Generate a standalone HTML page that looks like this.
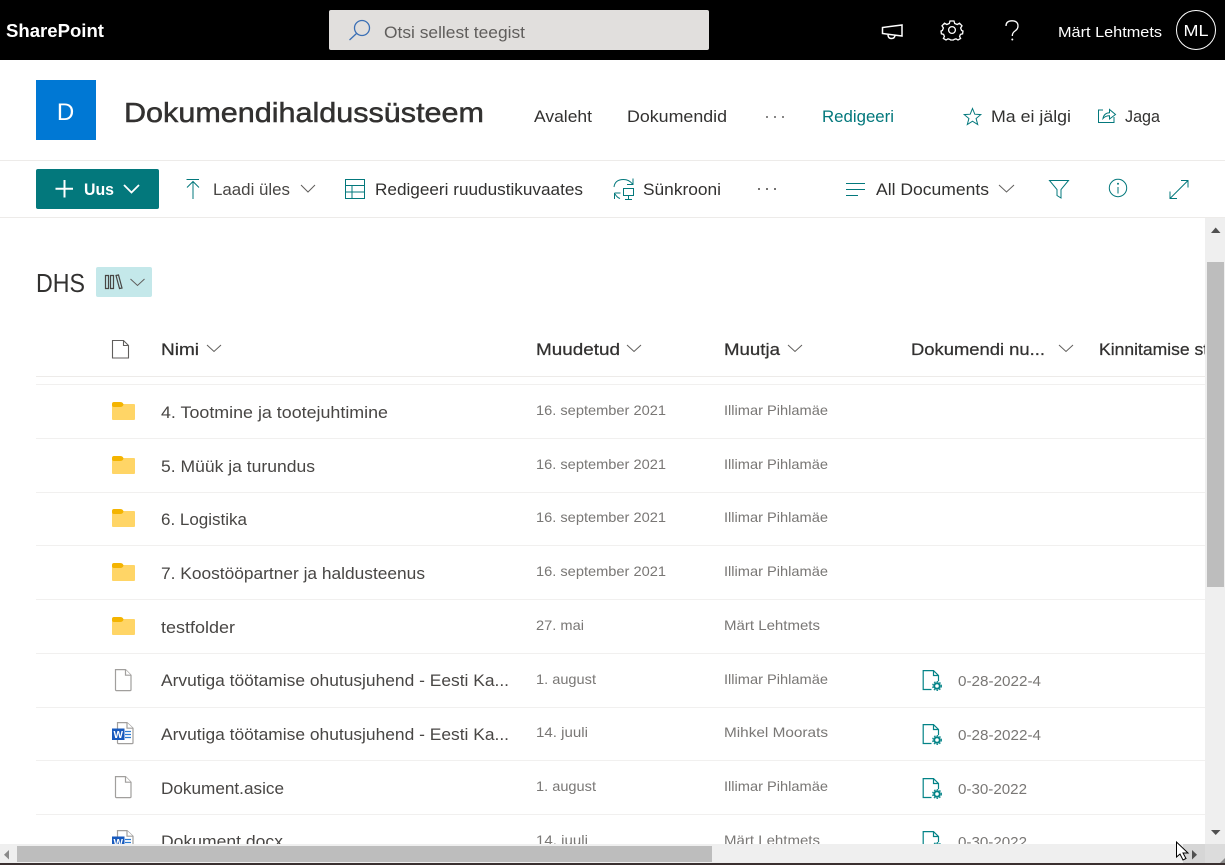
<!DOCTYPE html>
<html lang="et"><head><meta charset="utf-8"><title>DHS</title>
<style>
html,body{margin:0;padding:0;background:#fff;width:1225px;height:865px;overflow:hidden}
svg{display:block}
text{font-family:"Liberation Sans",sans-serif}
.n{font-size:17px;fill:#484644}
.d{font-size:14px;fill:#797775}
.a{font-size:14px;fill:#797775}
.h{font-size:17px;fill:#323130;stroke:#323130;stroke-width:.25}
.nav{font-size:17px;fill:#323130}
.num{font-size:14.5px;fill:#797775}
.ln{stroke:#f1f0ef;stroke-width:1;fill:none}
.ic{fill:none;stroke:#03787c;stroke-width:1}
.ch{fill:none;stroke:#605e5c;stroke-width:1}
.pg{fill:#fff;stroke:#a19f9d;stroke-width:1.2}
</style></head><body>
<svg xmlns="http://www.w3.org/2000/svg" width="1225" height="865" viewBox="0 0 1225 865">
<defs>
<clipPath id="list"><rect x="0" y="218" width="1205" height="626"/></clipPath>
<symbol id="folder" overflow="visible"><path fill="#ffd566" d="M0 3Q0 2 1 2H22Q23 2 23 3V17Q23 18 22 18H1Q0 18 0 17Z"/><path fill="#f4b400" d="M0 2Q0 0 2 0H8Q11 0 11.5 2.5Q11 5 8 5H2Q0 5 0 3Z"/></symbol>
<symbol id="file" overflow="visible"><path class="pg" d="M1.5 0.6H11.5L17 6.2V20.6Q17 21.6 16 21.6H2.5Q1.5 21.6 1.5 20.6Z"/><path class="pg" d="M11.5 0.6V6.2H17" fill="none"/></symbol>
<symbol id="word" overflow="visible"><path class="pg" d="M5.5 0.6H15L21 6.2V20.6Q21 21.6 20 21.6H6.5Q5.5 21.6 5.5 20.6Z"/><path class="pg" d="M15 0.6V6.2H21" fill="none"/><path d="M13 9.5H19M13 12.5H19M13 15.5H19" stroke="#2b7cd3" stroke-width="1.2"/><rect x="0" y="6.5" width="12.5" height="11.5" fill="#185abd"/><text x="6.2" y="16" font-size="10" font-weight="bold" fill="#fff" text-anchor="middle">W</text></symbol>
<symbol id="doc" overflow="visible"><path d="M9.5 19.5H1.2V0.6H11.5L16.5 5.5V11M11.5 0.6V5.5H16.5" fill="none" stroke="#038387" stroke-width="1.2"/><circle cx="15" cy="16" r="2.8" fill="none" stroke="#038387" stroke-width="2"/><circle cx="15" cy="16" r="4.4" fill="none" stroke="#038387" stroke-width="1.1" stroke-dasharray="1.6 1.3"/></symbol>
</defs>

<rect width="1225" height="865" fill="#fff"/>
<!-- suite bar -->
<rect width="1225" height="60" fill="#000"/>
<text x="6" y="37" font-size="18" font-weight="bold" fill="#fff" textLength="98" lengthAdjust="spacingAndGlyphs">SharePoint</text>
<rect x="329" y="10" width="380" height="40" rx="2" fill="#e1dfdd"/>
<circle cx="362" cy="28" r="7.5" fill="none" stroke="#3a6fb5" stroke-width="1.3"/><path d="M356.5 33.5L349.5 40" stroke="#3a6fb5" stroke-width="1.3"/>
<text x="384" y="38" font-size="17" fill="#605e5c" textLength="141" lengthAdjust="spacingAndGlyphs">Otsi sellest teegist</text>
<path d="M882.5 27.5V33.5L902 36V25ZM888 34.5Q888 38.5 891.5 38.5Q894.5 38.5 895 35.5" fill="none" stroke="#fff" stroke-width="1.5"/>
<circle cx="952" cy="30" r="3.4" fill="none" stroke="#fff" stroke-width="1.3"/>
<path d="M950 21H954L954.7 23.5L957.2 24.5L959.5 23.2L962 25.8L960.6 28L961.6 30.5L963 31L962.6 33.8L960.4 34.4L959.6 36.5L960.6 38.5L958 40L956 38.8L954 39.5L953.4 40H950.6L950 39.5L948 38.8L946 40L943.4 38.5L944.4 36.5L943.6 34.4L941.4 33.8L941 31L942.4 30.5L943.4 28L942 25.8L944.5 23.2L946.8 24.5L949.3 23.5Z" fill="none" stroke="#fff" stroke-width="1.3"/>
<path d="M1006 26Q1006 20.8 1012 20.8Q1018 20.8 1018 26Q1018 29 1015 31Q1012.3 32.8 1012.3 36" fill="none" stroke="#fff" stroke-width="1.3"/><circle cx="1012.3" cy="39.5" r="1" fill="#fff"/>
<text x="1058" y="37" font-size="15" fill="#fff" textLength="104" lengthAdjust="spacingAndGlyphs">Märt Lehtmets</text>
<circle cx="1196" cy="30" r="19.5" fill="#000" stroke="#fff" stroke-width="1"/>
<text x="1196" y="36" font-size="16" fill="#fff" text-anchor="middle" textLength="25" lengthAdjust="spacingAndGlyphs">ML</text>

<!-- site header -->
<rect x="36" y="80" width="60" height="60" fill="#0078d4"/>
<text x="65.5" y="120" font-size="24" fill="#fff" text-anchor="middle">D</text>
<text x="124" y="122" font-size="28" fill="#323130" textLength="360" lengthAdjust="spacingAndGlyphs" style="stroke:#323130;stroke-width:.5">Dokumendihaldussüsteem</text>
<text class="nav" x="534" y="122" textLength="58" lengthAdjust="spacingAndGlyphs">Avaleht</text>
<text class="nav" x="627" y="122" textLength="100" lengthAdjust="spacingAndGlyphs">Dokumendid</text>
<g fill="#323130"><circle cx="767" cy="117" r=".9"/><circle cx="775" cy="117" r=".9"/><circle cx="783" cy="117" r=".9"/></g>
<text x="822" y="122" font-size="17" fill="#03787c" textLength="72" lengthAdjust="spacingAndGlyphs">Redigeeri</text>
<path d="M972.5 108.5L974.8 114.2L980.8 114.6L976.1 118.5L977.7 124.5L972.5 121.2L967.3 124.5L968.9 118.5L964.2 114.6L970.2 114.2Z" class="ic"/>
<text class="nav" x="991" y="122" textLength="80" lengthAdjust="spacingAndGlyphs">Ma ei jälgi</text>
<path d="M1103 110H1098.5V122.5H1114V117M1103 118.5Q1104 113 1109.5 112.8V109.5L1115.5 114.5L1109.5 119V115.8Q1105.5 115.8 1103 118.5Z" class="ic"/>
<text class="nav" x="1125" y="122" textLength="35" lengthAdjust="spacingAndGlyphs">Jaga</text>
<line x1="0" y1="160.5" x2="1225" y2="160.5" stroke="#edebe9"/>

<!-- command bar -->
<rect x="36" y="169" width="123" height="40" rx="2" fill="#03787c"/>
<path d="M64.5 180V197.5M55.5 188.7H73" stroke="#fff" stroke-width="2"/>
<text x="84" y="195" font-size="17" font-weight="bold" fill="#fff" textLength="30" lengthAdjust="spacingAndGlyphs">Uus</text>
<path d="M124 185L131.5 192.5L139 185" fill="none" stroke="#fff" stroke-width="1.8"/>
<path d="M186.5 179.5H199M193 199V181.5M187 187.5L193 181.5L199 187.5" class="ic"/>
<text class="nav" x="213" y="195" textLength="77" lengthAdjust="spacingAndGlyphs" style="fill:#484644">Laadi üles</text>
<path d="M301 185L308 192L315 185" class="ch"/>
<path d="M345.5 179.5H364.5V198.5H345.5ZM345.5 185.5H364.5M345.5 192H364.5M352 185.5V198.5" class="ic"/>
<text class="nav" x="375" y="195" textLength="208" lengthAdjust="spacingAndGlyphs">Redigeeri ruudustikuvaates</text>
<path d="M614 187Q615 179.5 623.5 179.5Q629 179.5 632.5 184M633 178.5V184.5H627M614.5 193V199M614.5 193H620.5M615 194Q617 197.5 620 198.5" class="ic"/>
<rect x="623.5" y="188.5" width="10" height="7" class="ic"/><path d="M628.5 195.5V199M625 199.5H632" class="ic"/>
<text class="nav" x="643" y="195" textLength="78" lengthAdjust="spacingAndGlyphs">Sünkrooni</text>
<g fill="#484644"><circle cx="759" cy="189" r="1"/><circle cx="767" cy="189" r="1"/><circle cx="775" cy="189" r="1"/></g>
<path d="M846 183.5H865M846 189.5H865M846 195.5H858" class="ic"/>
<text class="nav" x="876" y="195" textLength="113" lengthAdjust="spacingAndGlyphs">All Documents</text>
<path d="M999 185L1006.5 192L1014 185" class="ch"/>
<path d="M1049.5 180.5H1068.5L1061 189.5V198L1057 195.5V189.5Z" class="ic"/>
<circle cx="1118" cy="188" r="8.7" class="ic"/><path d="M1118 187V193.5" class="ic"/><circle cx="1118" cy="183.7" r="1" fill="#03787c"/>
<path d="M1170 198.5L1188 180.5M1181 180.5H1188V187.5M1170 191.5V198.5H1177" class="ic"/>
<line x1="0" y1="217.5" x2="1225" y2="217.5" stroke="#edebe9"/>

<!-- library title -->
<text x="36" y="292" font-size="26" fill="#323130" textLength="49" lengthAdjust="spacingAndGlyphs">DHS</text>
<rect x="96" y="267" width="56" height="30" rx="2" fill="#c4e8ea"/>
<path d="M105.5 275.5H108.5V288.5H105.5ZM110.5 275.5H113.5V288.5H110.5ZM116 275.5L118.5 275L122 288L119.5 288.5Z" fill="none" stroke="#484644" stroke-width="1.2"/>
<path d="M130.5 279L137.5 285.5L144.5 279" class="ch"/>

<g clip-path="url(#list)">
<!-- header -->
<path d="M112.5 340.5H123.5L128.5 345.5V358H112.5ZM123.5 340.5V345.5H128.5" fill="none" stroke="#605e5c" stroke-width="1.1"/>
<text class="h" x="161" y="355" textLength="38" lengthAdjust="spacingAndGlyphs">Nimi</text>
<path d="M207 345L214 351.5L221 345" class="ch"/>
<text class="h" x="536" y="355" textLength="84" lengthAdjust="spacingAndGlyphs">Muudetud</text>
<path d="M627 345L634 351.5L641 345" class="ch"/>
<text class="h" x="724" y="355" textLength="56" lengthAdjust="spacingAndGlyphs">Muutja</text>
<path d="M788 345L795 351.5L802 345" class="ch"/>
<text class="h" x="911" y="355" textLength="134" lengthAdjust="spacingAndGlyphs">Dokumendi nu...</text>
<path d="M1059 345L1066 351.5L1073 345" class="ch"/>
<text class="h" x="1099" y="355" textLength="152" lengthAdjust="spacingAndGlyphs">Kinnitamise staatus</text>
<line x1="36" y1="376.5" x2="1205" y2="376.5" stroke="#edebe9"/>

<!-- row lines -->
<g class="ln">
<path d="M36 384.5H1205M36 438.5H1205M36 492.5H1205M36 545.5H1205M36 599.5H1205M36 653.5H1205M36 707.5H1205M36 760.5H1205M36 814.5H1205"/>
</g>

<!-- rows -->
<use href="#folder" x="112" y="402"/>
<text class="n" x="161" y="418" textLength="227" lengthAdjust="spacingAndGlyphs">4. Tootmine ja tootejuhtimine</text>
<text class="d" x="536" y="415" textLength="130" lengthAdjust="spacingAndGlyphs">16. september 2021</text>
<text class="a" x="724" y="415" textLength="104" lengthAdjust="spacingAndGlyphs">Illimar Pihlamäe</text>

<use href="#folder" x="112" y="456"/>
<text class="n" x="161" y="472" textLength="154" lengthAdjust="spacingAndGlyphs">5. Müük ja turundus</text>
<text class="d" x="536" y="469" textLength="130" lengthAdjust="spacingAndGlyphs">16. september 2021</text>
<text class="a" x="724" y="469" textLength="104" lengthAdjust="spacingAndGlyphs">Illimar Pihlamäe</text>

<use href="#folder" x="112" y="509"/>
<text class="n" x="161" y="525" textLength="86" lengthAdjust="spacingAndGlyphs">6. Logistika</text>
<text class="d" x="536" y="522" textLength="130" lengthAdjust="spacingAndGlyphs">16. september 2021</text>
<text class="a" x="724" y="522" textLength="104" lengthAdjust="spacingAndGlyphs">Illimar Pihlamäe</text>

<use href="#folder" x="112" y="563"/>
<text class="n" x="161" y="579" textLength="264" lengthAdjust="spacingAndGlyphs">7. Koostööpartner ja haldusteenus</text>
<text class="d" x="536" y="576" textLength="130" lengthAdjust="spacingAndGlyphs">16. september 2021</text>
<text class="a" x="724" y="576" textLength="104" lengthAdjust="spacingAndGlyphs">Illimar Pihlamäe</text>

<use href="#folder" x="112" y="617"/>
<text class="n" x="161" y="633" textLength="74" lengthAdjust="spacingAndGlyphs">testfolder</text>
<text class="d" x="536" y="630" textLength="48" lengthAdjust="spacingAndGlyphs">27. mai</text>
<text class="a" x="724" y="630" textLength="96" lengthAdjust="spacingAndGlyphs">Märt Lehtmets</text>

<use href="#file" x="114" y="669"/>
<text class="n" x="161" y="686" textLength="348" lengthAdjust="spacingAndGlyphs">Arvutiga töötamise ohutusjuhend - Eesti Ka...</text>
<text class="d" x="536" y="684" textLength="60" lengthAdjust="spacingAndGlyphs">1. august</text>
<text class="a" x="724" y="684" textLength="104" lengthAdjust="spacingAndGlyphs">Illimar Pihlamäe</text>
<use href="#doc" x="922" y="670"/>
<text class="num" x="958" y="686" textLength="83" lengthAdjust="spacingAndGlyphs">0-28-2022-4</text>

<use href="#word" x="112" y="722"/>
<text class="n" x="161" y="740" textLength="348" lengthAdjust="spacingAndGlyphs">Arvutiga töötamise ohutusjuhend - Eesti Ka...</text>
<text class="d" x="536" y="737" textLength="52" lengthAdjust="spacingAndGlyphs">14. juuli</text>
<text class="a" x="724" y="737" textLength="104" lengthAdjust="spacingAndGlyphs">Mihkel Moorats</text>
<use href="#doc" x="922" y="724"/>
<text class="num" x="958" y="740" textLength="83" lengthAdjust="spacingAndGlyphs">0-28-2022-4</text>

<use href="#file" x="114" y="776"/>
<text class="n" x="161" y="794" textLength="123" lengthAdjust="spacingAndGlyphs">Dokument.asice</text>
<text class="d" x="536" y="791" textLength="60" lengthAdjust="spacingAndGlyphs">1. august</text>
<text class="a" x="724" y="791" textLength="104" lengthAdjust="spacingAndGlyphs">Illimar Pihlamäe</text>
<use href="#doc" x="922" y="778"/>
<text class="num" x="958" y="794" textLength="69" lengthAdjust="spacingAndGlyphs">0-30-2022</text>

<use href="#word" x="112" y="830"/>
<text class="n" x="161" y="847" textLength="122" lengthAdjust="spacingAndGlyphs">Dokument.docx</text>
<text class="d" x="536" y="845" textLength="52" lengthAdjust="spacingAndGlyphs">14. juuli</text>
<text class="a" x="724" y="845" textLength="96" lengthAdjust="spacingAndGlyphs">Märt Lehtmets</text>
<use href="#doc" x="922" y="831"/>
<text class="num" x="958" y="847" textLength="69" lengthAdjust="spacingAndGlyphs">0-30-2022</text>
</g>

<!-- vertical scrollbar -->
<rect x="1205" y="218" width="20" height="626" fill="#efefef"/>
<rect x="1207" y="262" width="17" height="325" fill="#bdbdbd"/>
<path d="M1211 233H1220.5L1215.7 227.5Z" fill="#505050"/>
<path d="M1211 830H1220.5L1215.7 835Z" fill="#505050"/>

<!-- horizontal scrollbar -->
<rect x="0" y="844" width="1225" height="19" fill="#efefef"/>
<rect x="17" y="846" width="695" height="16" fill="#bdbdbd"/>
<path d="M9 850V859.5L4 854.7Z" fill="#8a8a8a"/>
<rect x="1183" y="844" width="22" height="19" fill="#d6d6d6"/>
<rect x="1205" y="844" width="20" height="19" fill="#dcdcdc"/>
<path d="M1192 850V859.5L1197 854.7Z" fill="#505050"/>
<path d="M1225 858L1220 863H1225Z" fill="#8a8a8a"/>
<rect x="0" y="863" width="1225" height="2" fill="#3a3030"/>
<!-- cursor -->
<path d="M1176.5 842V857L1180 854L1183 860L1186 858.5L1183 853H1188Z" fill="#fff" stroke="#000" stroke-width="1"/>
</svg>
</body></html>
